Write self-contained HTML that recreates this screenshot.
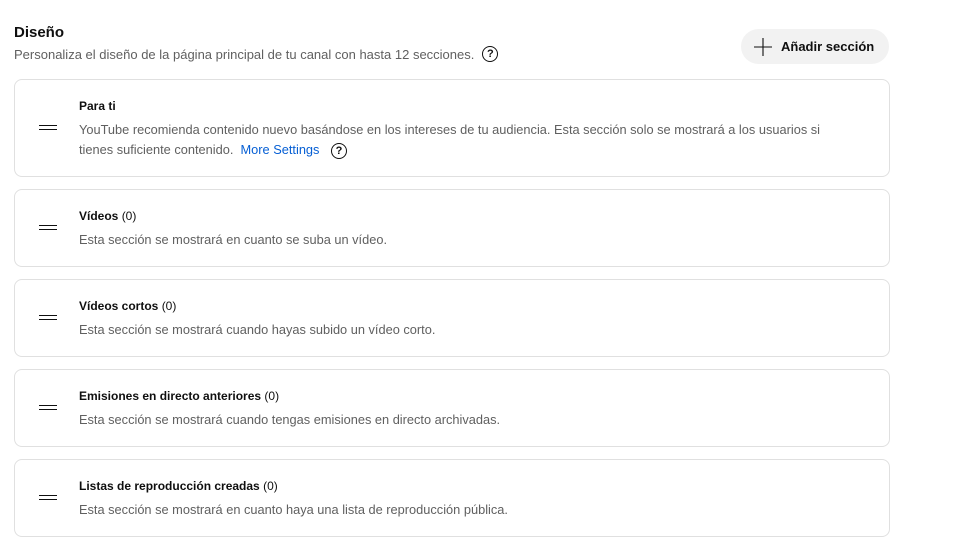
<!DOCTYPE html>
<html><head><meta charset="utf-8"><style>
body{margin:0;background:#fff;font-family:"Liberation Sans",Arial,sans-serif;color:#0f0f0f;width:966px;height:560px;overflow:hidden;position:relative}
.h{position:absolute;left:14px;top:24px;font-size:15px;font-weight:bold}
.sub{position:absolute;left:14px;top:46px;font-size:13px;color:#606060;display:flex;align-items:center}
.q{display:inline-block;width:14px;height:14px;border:1.5px solid #0f0f0f;border-radius:50%;font-size:11px;font-weight:bold;color:#0f0f0f;text-align:center;line-height:14px;margin-left:8px}
.btn{position:absolute;left:741px;top:29px;width:148px;height:35px;border-radius:18px;background:#f2f2f2;font-size:13px;font-weight:bold;display:flex;align-items:center}
.card{position:absolute;left:14px;width:876px;border:1px solid #e0e0e0;border-radius:8px;box-sizing:border-box}
.drag{position:absolute;left:24px;width:18px;height:3px;border-top:1px solid #0f0f0f;border-bottom:1px solid #0f0f0f}
.t{position:absolute;left:64px;font-size:12px;font-weight:bold}
.t span{font-weight:normal}
.d{position:absolute;left:64px;font-size:12.8px;color:#606060;line-height:20px;width:765px}
a{color:#065fd4;text-decoration:none}
</style></head><body>
<div class="h">Diseño</div>
<div class="sub">Personaliza el diseño de la página principal de tu canal con hasta 12 secciones.<span class="q">?</span></div>
<div class="btn"><svg width="18" height="18" style="margin:0 9px 0 13px" viewBox="0 0 18 18"><path d="M9 0v18M0 9h18" stroke="#0f0f0f" stroke-width="1.1"/></svg>Añadir sección</div>

<div class="card" style="top:79px;height:98px"><div class="drag" style="top:45px"></div><div class="t" style="top:19px">Para ti</div><div class="d" style="top:40px">YouTube recomienda contenido nuevo basándose en los intereses de tu audiencia. Esta sección solo se mostrará a los usuarios si tienes suficiente contenido.&nbsp; <a>More Settings</a> <span class="q" style="margin-left:8px;vertical-align:middle">?</span></div></div>

<div class="card" style="top:189px;height:78px"><div class="drag" style="top:35px"></div><div class="t" style="top:19px">Vídeos <span>(0)</span></div><div class="d" style="top:40px">Esta sección se mostrará en cuanto se suba un vídeo.</div></div>

<div class="card" style="top:279px;height:78px"><div class="drag" style="top:35px"></div><div class="t" style="top:19px">Vídeos cortos <span>(0)</span></div><div class="d" style="top:40px">Esta sección se mostrará cuando hayas subido un vídeo corto.</div></div>

<div class="card" style="top:369px;height:78px"><div class="drag" style="top:35px"></div><div class="t" style="top:19px">Emisiones en directo anteriores <span>(0)</span></div><div class="d" style="top:40px">Esta sección se mostrará cuando tengas emisiones en directo archivadas.</div></div>

<div class="card" style="top:459px;height:78px"><div class="drag" style="top:35px"></div><div class="t" style="top:19px">Listas de reproducción creadas <span>(0)</span></div><div class="d" style="top:40px">Esta sección se mostrará en cuanto haya una lista de reproducción pública.</div></div>
</body></html>
